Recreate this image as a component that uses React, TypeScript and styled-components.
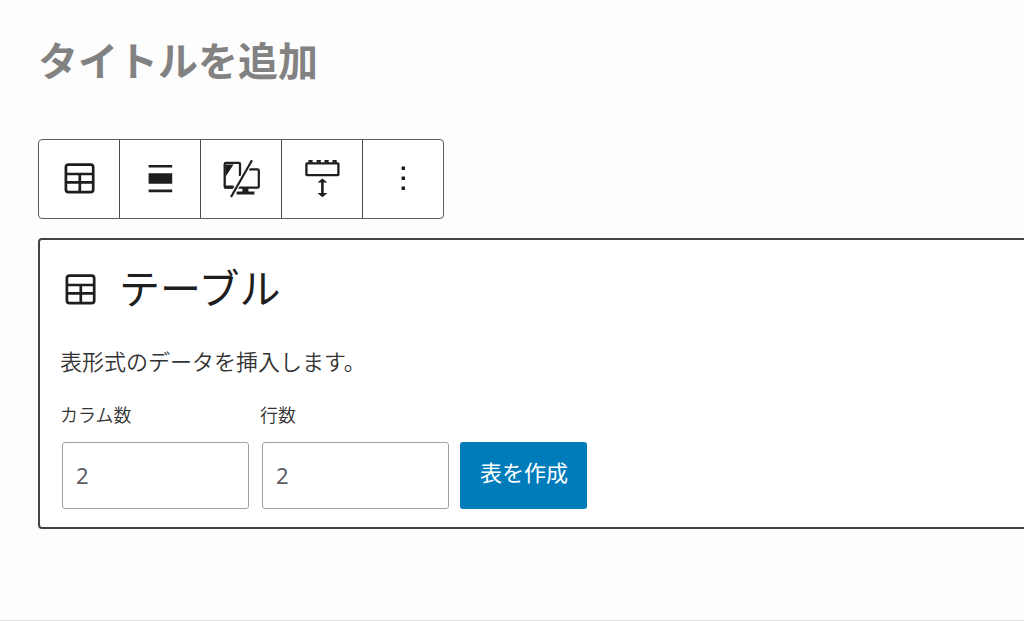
import React, { useState } from "react";
import styled, { createGlobalStyle } from "styled-components";

const GlobalStyle = createGlobalStyle`
  *, *::before, *::after { box-sizing: border-box; }
  body {
    margin: 0;
    background: #fdfdfd;
    color: #1e1e1e;
    font-family: "Noto Sans", "Noto Sans CJK JP", sans-serif;
  }
`;

const Editor = styled.main`
  min-height: 100vh;
  padding: 29px 0 32px 38px;
  border-bottom: 1px solid #e2e2e2;
  overflow: hidden;
`;

const PostTitle = styled.h1`
  margin: 0 0 50px;
  font-family: "Noto Sans CJK JP", sans-serif;
  font-size: 40px;
  line-height: 60px;
  font-weight: 700;
  color: #828282;
`;

const Toolbar = styled.div`
  display: inline-flex;
  height: 80px;
  background: #fff;
  border: 1px solid #5c5c5c;
  border-radius: 4px;
`;

const ToolButton = styled.button`
  display: flex;
  align-items: center;
  justify-content: center;
  width: 80px;
  padding: 0;
  border: 0;
  background: none;
  color: #1e1e1e;

  & + & {
    width: 81px;
    border-left: 1px solid #4a4a4a;
  }
`;

const Icon = styled.svg`
  width: 40px;
  height: 40px;
  flex: none;
  display: block;
`;

const Panel = styled.section`
  margin: 19px -8px 0 0;
  padding: 20px;
  padding-bottom: 18px;
  background: #fff;
  border: 2px solid #444;
  border-radius: 4px;
`;

const PanelHeading = styled.h2`
  display: flex;
  align-items: center;
  gap: 19px;
  margin: 0;
  font-family: "Noto Sans CJK JP", sans-serif;
  font-size: 41px;
  line-height: 52px;
  font-weight: 400;
`;

const HeadingText = styled.span`
  padding-bottom: 8px;
`;

const Description = styled.p`
  margin: 24px 0;
  font-family: "Noto Sans CJK JP", sans-serif;
  font-size: 22px;
  line-height: 32px;
  font-weight: 350;
  color: #333;
`;

const Form = styled.form`
  display: flex;
  align-items: flex-end;
  gap: 11px;
`;

const Field = styled.label`
  display: flex;
  flex-direction: column;
  gap: 14px;
  font-family: "Noto Sans CJK JP", sans-serif;
  font-size: 18px;
  line-height: 28px;
  font-weight: 350;
  color: #333;
`;

const NumberBox = styled.input`
  width: 187px;
  height: 67px;
  margin: 0 0 0 2px;
  padding: 0 13px 2px;
  border: 1px solid #a0a0a0;
  border-radius: 3px;
  background: #fff;
  color: #5a6066;
  font-family: "Noto Sans", sans-serif;
  font-size: 22px;
`;

const CreateButton = styled.button`
  height: 67px;
  padding: 0 19px 9px 20px;
  border: 0;
  border-radius: 3px;
  background: #007cba;
  color: #fff;
  font-family: "Noto Sans CJK JP", sans-serif;
  font-size: 22px;
  white-space: nowrap;
`;

const TableIcon = () => (
  <Icon viewBox="0 0 40 40" fill="none" stroke="currentColor" strokeWidth="2.7" aria-hidden="true">
    <rect x="6.9" y="5.6" width="27.3" height="27.6" rx="2.6" />
    <path d="M7 15H34M7 23.4H34M20.8 15V33" />
  </Icon>
);

const AlignIcon = () => (
  <Icon viewBox="0 0 40 40" fill="currentColor" aria-hidden="true">
    <path d="M8.6 6H32.2V8.6H8.6ZM8.6 14.3H32.2V24.7H8.6ZM8.6 30.6H32.2V33.2H8.6Z" />
  </Icon>
);

const DevicesIcon = () => (
  <Icon viewBox="0 0 40 40" fill="none" stroke="currentColor" aria-hidden="true">
    <path
      d="M13.5 28.5H4.5Q3.7 28.5 3.7 27.5V5Q3.7 3.8 5 3.8H17.8Q19 3.8 19 5V17"
      strokeWidth="2.3"
    />
    <path d="M3 26.6H12.5L11 29.6H3Z" fill="currentColor" stroke="none" />
    <path d="M4.7 5.6H12.6L4.7 17.4Z" fill="currentColor" stroke="none" />
    <path d="M28 10.4H36.6Q37.8 10.4 37.8 11.6V27.4Q37.8 28.6 36.6 28.6H14" strokeWidth="2.2" />
    <path d="M21.4 28.6H27.4V32.4H33.4V35.4H15.6V32.4H21.4Z" fill="currentColor" stroke="none" />
    <path d="M31 1.2L10 38" stroke="#fff" strokeWidth="4.4" />
    <path d="M31 1.2L10 38" strokeWidth="2.2" />
  </Icon>
);

const SpacingIcon = () => (
  <Icon viewBox="0 0 40 40" fill="none" stroke="currentColor" aria-hidden="true">
    <rect x="4.4" y="4.4" width="32" height="11.8" rx="0.6" strokeWidth="2.3" />
    <path d="M6.4 2.4H10.6M14.6 2.4H18.8M22.5 2.4H26.7M30.5 2.4H34.7" strokeWidth="2.6" />
    <path d="M20.4 21V36.6" strokeWidth="2.6" />
    <path
      d="M20.4 19.4L25.4 23.6H15.4ZM20.4 38.2L15.4 34H25.4Z"
      fill="currentColor"
      stroke="none"
    />
  </Icon>
);

const MoreIcon = () => (
  <Icon viewBox="0 0 40 40" fill="currentColor" aria-hidden="true">
    <path d="M18.6 7.6H22V11H18.6ZM18.6 17.6H22V21H18.6ZM18.6 27.6H22V31H18.6Z" />
  </Icon>
);

const tools = [
  { label: "テーブル", Glyph: TableIcon },
  { label: "配置", Glyph: AlignIcon },
  { label: "表示デバイス", Glyph: DevicesIcon },
  { label: "余白", Glyph: SpacingIcon },
  { label: "オプション", Glyph: MoreIcon },
];

export default function App() {
  const [columns, setColumns] = useState("2");
  const [rows, setRows] = useState("2");

  return (
    <>
      <GlobalStyle />
      <Editor lang="ja">
        <PostTitle>タイトルを追加</PostTitle>
        <Toolbar role="toolbar">
          {tools.map(({ label, Glyph }) => (
            <ToolButton key={label} type="button" aria-label={label}>
              <Glyph />
            </ToolButton>
          ))}
        </Toolbar>
        <Panel>
          <PanelHeading>
            <TableIcon />
            <HeadingText>テーブル</HeadingText>
          </PanelHeading>
          <Description>表形式のデータを挿入します。</Description>
          <Form onSubmit={(event) => event.preventDefault()}>
            <Field>
              カラム数
              <NumberBox
                inputMode="numeric"
                value={columns}
                onChange={(event) => setColumns(event.target.value)}
              />
            </Field>
            <Field>
              行数
              <NumberBox
                inputMode="numeric"
                value={rows}
                onChange={(event) => setRows(event.target.value)}
              />
            </Field>
            <CreateButton type="submit">表を作成</CreateButton>
          </Form>
        </Panel>
      </Editor>
    </>
  );
}
